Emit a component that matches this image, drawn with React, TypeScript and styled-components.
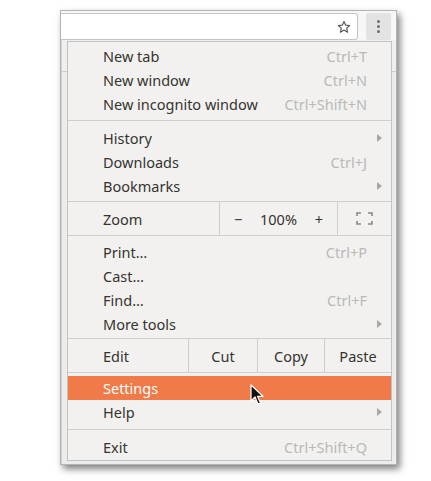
import React from 'react';
import styled, { createGlobalStyle } from 'styled-components';

const GlobalStyle = createGlobalStyle`
  html, body {
    margin: 0;
    padding: 0;
    background: #ffffff;
  }
  body {
    font-family: "Noto Sans", "Open Sans", sans-serif;
  }
`;

const Page = styled.div`
  width: 431px;
  height: 481px;
  padding: 10px 0 0 60px;
  box-sizing: border-box;
`;

const Window = styled.div`
  width: 337px;
  height: 455px;
  box-sizing: border-box;
  border: 1px solid #b4b4b4;
  display: flex;
  flex-direction: column;
  background: #f6f6f6;
  box-shadow: 3px 4px 7px rgba(0, 0, 0, 0.5);
`;

const Toolbar = styled.div`
  height: 29px;
  display: flex;
  align-items: flex-end;
  gap: 8px;
  background: #f7f7f7;
  padding-right: 5px;
`;

const Omnibox = styled.div`
  flex: 1;
  height: 27px;
  box-sizing: border-box;
  background: #ffffff;
  border: 1px solid #c4c4c4;
  border-left: none;
  border-radius: 0 3px 3px 0;
  display: flex;
  align-items: center;
  justify-content: flex-end;
  padding-right: 6px;
`;

const MenuButton = styled.div`
  width: 25px;
  height: 27px;
  background: #e3e3e3;
  border-radius: 2px;
  display: flex;
  flex-direction: column;
  align-items: center;
  justify-content: center;
  gap: 2px;
`;

const Dot = styled.span`
  width: 3px;
  height: 3px;
  border-radius: 50%;
  background: #6e6e6e;
`;

const Content = styled.div`
  flex: 1;
  position: relative;
  background: #ececec;
  border-left: 1px solid #d2d2d2;
`;

const Strip = styled.div`
  height: 31px;
  border-bottom: 1px solid #cdcdcd;
  background: #efefef;
`;

const Menu = styled.div`
  position: absolute;
  top: 1px;
  left: 5px;
  width: 325px;
  box-sizing: border-box;
  background: #f2f1f0;
  border: 1px solid #c2c2c2;
  padding: 2px 0 1px;
  font-size: 14.5px;
  color: #35342f;
`;

const Item = styled.div<{ $active?: boolean }>`
  height: 24px;
  display: flex;
  align-items: center;
  padding: 0 9px 0 35px;
  background: ${p => (p.$active ? '#f07a48' : 'transparent')};
  color: ${p => (p.$active ? '#ffffff' : '#35342f')};
`;

const Label = styled.span`
  flex: 1;
`;

const Shortcut = styled.span`
  color: #bab9b7;
  margin-right: 15px;
`;

const Arrow = styled.span`
  width: 0;
  height: 0;
  border-top: 4px solid transparent;
  border-bottom: 4px solid transparent;
  border-left: 5px solid #a8a7a5;
`;

const Separator = styled.div<{ $before: number; $after: number }>`
  height: 1px;
  background: #cfcecc;
  margin: ${p => p.$before}px 0 ${p => p.$after}px;
`;

const ButtonRow = styled.div<{ $cols: string; $before: number; $after: number }>`
  display: grid;
  grid-template-columns: ${p => p.$cols};
  height: 35px;
  box-sizing: border-box;
  border-top: 1px solid #cfcecc;
  border-bottom: 1px solid #cfcecc;
  margin: ${p => p.$before}px 0 ${p => p.$after}px;
`;

const Cell = styled.div<{ $first?: boolean }>`
  display: flex;
  align-items: center;
  justify-content: ${p => (p.$first ? 'flex-start' : 'center')};
  padding-left: ${p => (p.$first ? '35px' : '0')};
  border-left: ${p => (p.$first ? 'none' : '1px solid #cfcecc')};
`;

const ZoomControls = styled(Cell)`
  justify-content: space-between;
  padding: 0 14px 0 14px;
`;

const Cursor = styled.svg`
  position: absolute;
  left: 188px;
  top: 344px;
`;

type Entry = { label: string; shortcut?: string; submenu?: boolean; active?: boolean };

const MenuItem = ({ label, shortcut, submenu, active }: Entry) => (
  <Item $active={active}>
    <Label>{label}</Label>
    {shortcut && <Shortcut>{shortcut}</Shortcut>}
    {submenu && <Arrow />}
  </Item>
);

const Star = () => (
  <svg width="14" height="14" viewBox="0 0 24 24" fill="none" stroke="#555" strokeWidth="2" strokeLinejoin="round">
    <polygon points="12,2.5 14.9,8.8 21.7,9.4 16.6,14 18.1,20.8 12,17.3 5.9,20.8 7.4,14 2.3,9.4 9.1,8.8" />
  </svg>
);

const FullscreenIcon = () => (
  <svg width="17" height="13" viewBox="0 0 17 13" fill="none" stroke="#8a8987" strokeWidth="1.6">
    <path d="M1 4V1h4M12 1h4v3M16 9v3h-4M5 12H1V9" />
  </svg>
);

export default function App() {
  return (
    <>
      <GlobalStyle />
      <Page>
        <Window>
          <Toolbar>
            <Omnibox>
              <Star />
            </Omnibox>
            <MenuButton>
              <Dot />
              <Dot />
              <Dot />
            </MenuButton>
          </Toolbar>
          <Content>
            <Strip />
            <Menu>
              <MenuItem label="New tab" shortcut="Ctrl+T" />
              <MenuItem label="New window" shortcut="Ctrl+N" />
              <MenuItem label="New incognito window" shortcut="Ctrl+Shift+N" />
              <Separator $before={4} $after={5} />
              <MenuItem label="History" submenu />
              <MenuItem label="Downloads" shortcut="Ctrl+J" />
              <MenuItem label="Bookmarks" submenu />
              <ButtonRow $cols="151px 118px 1fr" $before={3} $after={4}>
                <Cell $first>Zoom</Cell>
                <ZoomControls>
                  <span>−</span>
                  <span>100%</span>
                  <span>+</span>
                </ZoomControls>
                <Cell>
                  <FullscreenIcon />
                </Cell>
              </ButtonRow>
              <MenuItem label="Print…" shortcut="Ctrl+P" />
              <MenuItem label="Cast…" />
              <MenuItem label="Find…" shortcut="Ctrl+F" />
              <MenuItem label="More tools" submenu />
              <ButtonRow $cols="120px 69px 67px 1fr" $before={2} $after={3}>
                <Cell $first>Edit</Cell>
                <Cell>Cut</Cell>
                <Cell>Copy</Cell>
                <Cell>Paste</Cell>
              </ButtonRow>
              <MenuItem label="Settings" active />
              <MenuItem label="Help" submenu />
              <Separator $before={5} $after={5} />
              <MenuItem label="Exit" shortcut="Ctrl+Shift+Q" />
            </Menu>
            <Cursor width="14" height="22" viewBox="0 0 14 22">
              <path d="M1 1 L1 17 L5 13 L8 20 L10.5 19 L7.5 12.3 L13 12.3 Z" fill="#111" stroke="#fff" strokeWidth="1.2" strokeLinejoin="round" />
            </Cursor>
          </Content>
        </Window>
      </Page>
    </>
  );
}
